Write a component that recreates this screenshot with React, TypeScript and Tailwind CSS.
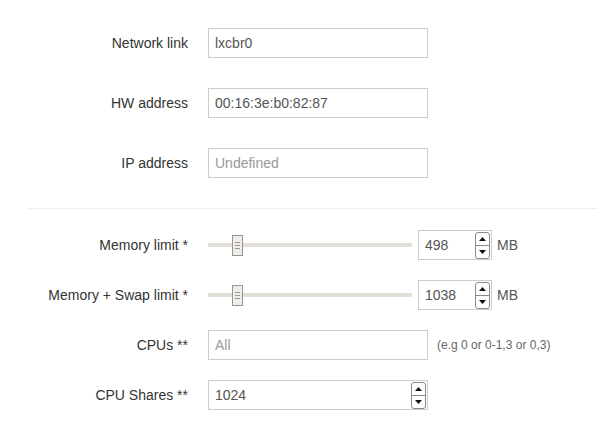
const fieldRows = [
  { label: "Network link", value: "lxcbr0", placeholder: "" },
  { label: "HW address", value: "00:16:3e:b0:82:87", placeholder: "" },
  { label: "IP address", value: "", placeholder: "Undefined" },
];

const memoryRows = [
  { label: "Memory limit *", value: "498", handle: 24 },
  { label: "Memory + Swap limit *", value: "1038", handle: 24 },
];

const Spinner = () => {
  return (
    <div className="flex flex-col w-[15px] h-[27px] border border-[#8a8a8a] rounded-[3px] bg-white overflow-hidden">
      <div className="flex-1 flex items-center justify-center border-b border-[#8a8a8a]">
        <svg width="7" height="4" viewBox="0 0 7 4">
          <polygon points="0,4 7,4 3.5,0" fill="#111" />
        </svg>
      </div>
      <div className="flex-1 flex items-center justify-center">
        <svg width="7" height="4" viewBox="0 0 7 4">
          <polygon points="0,0 7,0 3.5,4" fill="#111" />
        </svg>
      </div>
    </div>
  );
};

const Slider = ({ handle }: { handle: number }) => {
  return (
    <div className="relative w-[204px] h-[30px] flex items-center">
      <div className="w-full h-[4px] bg-[#e2ded8]" />
      <div
        className="absolute top-[5px] w-[11px] h-[21px] border border-[#9a9590] bg-[#efedea] flex flex-col items-center justify-center gap-[2px]"
        style={{ left: handle }}
      >
        <div className="w-[5px] h-px bg-[#9a9590]" />
        <div className="w-[5px] h-px bg-[#9a9590]" />
        <div className="w-[5px] h-px bg-[#9a9590]" />
      </div>
    </div>
  );
};

const Label = ({ children }: { children: React.ReactNode }) => (
  <div className="w-[188px] shrink-0 text-right text-[14px] text-[#333]">{children}</div>
);

export default function App() {
  return (
    <div
      className="w-full h-[437px] bg-white overflow-hidden"
      style={{ fontFamily: '"Liberation Sans", Arial, sans-serif' }}
    >
      <div className="flex flex-col gap-[30px] pt-[28px]">
        {fieldRows.map((r, i) => (
          <div key={i} className="flex items-center h-[30px]">
            <Label>{r.label}</Label>
            <div className="ml-[20px] w-[220px] h-[30px] border border-[#ccc] flex items-center px-[6px] text-[14px]">
              {r.value ? (
                <span className="text-[#555]">{r.value}</span>
              ) : (
                <span className="text-[#999]">{r.placeholder}</span>
              )}
            </div>
          </div>
        ))}
      </div>

      <div className="mt-[30px] ml-[28px] mr-[15px] border-t border-[#eee]" />

      <div className="flex flex-col gap-[20px] pt-[21px]">
        {memoryRows.map((r, i) => (
          <div key={i} className="flex items-center h-[30px]">
            <Label>{r.label}</Label>
            <div className="ml-[20px]">
              <Slider handle={r.handle} />
            </div>
            <div className="ml-[6px] w-[74px] h-[30px] border border-[#ccc] flex items-center justify-between pl-[6px] pr-[1px] text-[14px] text-[#555]">
              <span>{r.value}</span>
              <Spinner />
            </div>
            <span className="ml-[5px] text-[14px] text-[#555]">MB</span>
          </div>
        ))}

        <div className="flex items-center h-[30px]">
          <Label>CPUs **</Label>
          <div className="ml-[20px] w-[220px] h-[30px] border border-[#ccc] flex items-center px-[6px] text-[14px] text-[#999]">
            All
          </div>
          <span className="ml-[9px] text-[12px] text-[#666]">(e.g 0 or 0-1,3 or 0,3)</span>
        </div>

        <div className="flex items-center h-[30px]">
          <Label>CPU Shares **</Label>
          <div className="ml-[20px] w-[220px] h-[30px] border border-[#ccc] flex items-center justify-between pl-[6px] pr-[1px] text-[14px] text-[#555]">
            <span>1024</span>
            <Spinner />
          </div>
        </div>
      </div>
    </div>
  );
}
